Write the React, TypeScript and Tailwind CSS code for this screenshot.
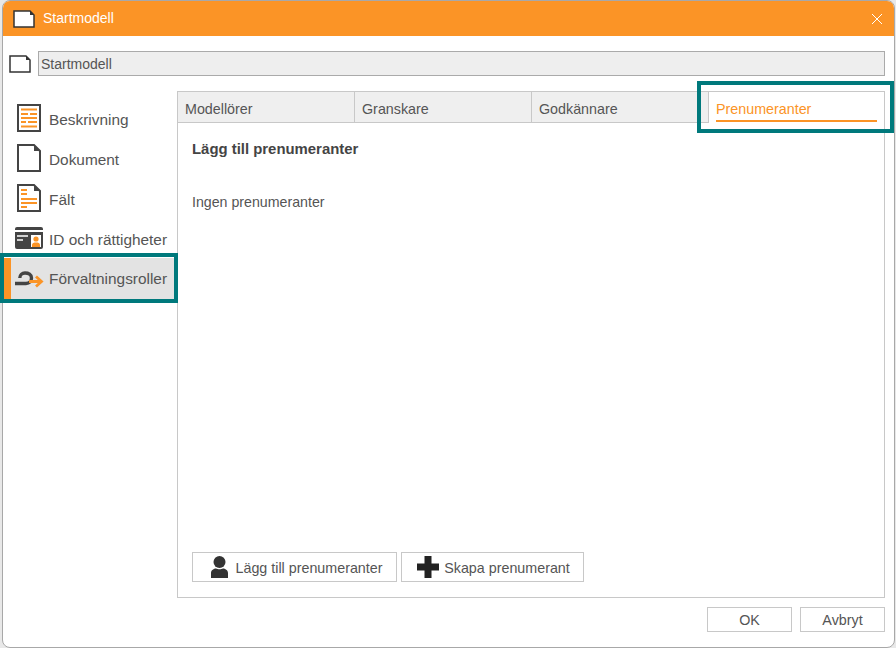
const tabs = ["Modellörer", "Granskare", "Godkännare"];

function PageIcon({ className }: { className?: string }) {
  return (
    <svg className={className} width="22" height="18" viewBox="0 0 22 18" fill="none">
      <path d="M1 1H17L21 5V17H1Z" fill="#fff" stroke="#333" strokeWidth="1.5" />
      <path d="M17 1V5H21Z" fill="#333" />
    </svg>
  );
}

function DescIcon() {
  return (
    <svg width="24" height="28" viewBox="0 0 24 28" fill="none">
      <rect x="1" y="1" width="22" height="26" fill="#fff" stroke="#444" strokeWidth="2" />
      <path
        d="M4 5.500H20M4 10H11M13 10H20M4 14H20M4 18H9M11 18H20M4 22.500H20"
        stroke="#fb9426"
        strokeWidth="2"
      />
    </svg>
  );
}

function DocIcon() {
  return (
    <svg width="24" height="28" viewBox="0 0 24 28" fill="none">
      <path d="M1 1H17L23 7V27H1Z" fill="#fff" stroke="#444" strokeWidth="2" />
      <path d="M17 1V7H23Z" fill="#444" />
    </svg>
  );
}

function FieldIcon() {
  return (
    <svg width="24" height="28" viewBox="0 0 24 28" fill="none">
      <path d="M1 1H17L23 7V27H1Z" fill="#fff" stroke="#444" strokeWidth="2" />
      <path d="M17 1V7H23Z" fill="#444" />
      <path d="M4 6H10M4 10H10M4 15H20M4 19H20M4 23H10" stroke="#fb9426" strokeWidth="1.800" />
    </svg>
  );
}

function IdIcon() {
  return (
    <svg width="28" height="22" viewBox="0 0 28 22" fill="none">
      <rect width="28" height="22" rx="2" fill="#444" />
      <rect x="0" y="3" width="28" height="2" fill="#fff" />
      <path d="M2 9H13M2 13H8" stroke="#fff" strokeWidth="1.600" />
      <rect x="16" y="8" width="10" height="12" fill="#fff" />
      <circle cx="21" cy="12" r="2.600" fill="#fb9426" />
      <path d="M17 20V18C17 16 19 15.500 21 15.500C23 15.500 25 16 25 18V20Z" fill="#fb9426" />
    </svg>
  );
}

function RoleIcon() {
  return (
    <svg width="29" height="18" viewBox="0 0 29 18" fill="none">
      <path
        d="M0 13.500H11C14.500 13.500 16.500 11 16.500 8C16.500 4.500 13.500 3 10 3C7 3 4.800 5 4.800 8"
        stroke="#444"
        strokeWidth="3.400"
      />
      <path d="M14 11.500H26M21 6.500L26.500 11.500L21 16.500" stroke="#fb9426" strokeWidth="2.800" />
    </svg>
  );
}

function PersonIcon() {
  return (
    <svg width="17" height="22" viewBox="0 0 17 22" fill="#333">
      <ellipse cx="8.500" cy="6" rx="6" ry="6" />
      <path d="M0 22V17C0 14 3 12.500 5 12.500C6.500 13.500 10.500 13.500 12 12.500C14 12.500 17 14 17 17V22C12 22.500 5 22.500 0 22Z" />
    </svg>
  );
}

function PlusIcon() {
  return (
    <svg width="22" height="22" viewBox="0 0 22 22" fill="#222">
      <path d="M7.500 0H14.500V7.500H22V14.500H14.500V22H7.500V14.500H0V7.500H7.500Z" />
    </svg>
  );
}

const navItems = [
  { label: "Beskrivning", icon: <DescIcon />, pad: "pl-[14px]" },
  { label: "Dokument", icon: <DocIcon />, pad: "pl-[14px]" },
  { label: "Fält", icon: <FieldIcon />, pad: "pl-[14px]" },
  { label: "ID och rättigheter", icon: <IdIcon />, pad: "pl-[12px]" },
];

export default function App() {
  return (
    <div className="relative h-[648px] w-[896px] overflow-hidden bg-[#e8e8e8] font-['Liberation_Sans',Arial,sans-serif] text-[#555]">
      <div className="ml-[2px] flex h-[648px] w-[893px] flex-col overflow-hidden rounded-[8px] border border-[#a8a8a8] bg-white">
        <div className="flex h-[35px] shrink-0 items-center justify-between bg-[#fb9426] pr-[11px] pl-[10px] text-white">
          <div className="flex items-center gap-[8px]">
            <PageIcon />
            <span className="text-[14px]">Startmodell</span>
          </div>
          <svg width="12" height="12" viewBox="0 0 12 12" stroke="#fff" strokeWidth="1">
            <path d="M1 1L11 11M11 1L1 11" />
          </svg>
        </div>

        <div className="mt-[15px] flex h-[25px] shrink-0 items-center pr-[9px] pl-[6px]">
          <PageIcon className="mr-[7px]" />
          <div className="flex h-[25px] flex-1 items-center border border-[#aaa] bg-[#eee] pt-px pl-[2px] text-[14px]">
            Startmodell
          </div>
        </div>

        <div className="mt-[15px] flex min-h-0 flex-1">
          <div className="w-[174px] shrink-0 pt-[7px]">
            {navItems.map((item) => (
              <div key={item.label} className={`flex h-[40px] items-center ${item.pad}`}>
                <span className={item.pad === "pl-[12px]" ? "mr-[6px]" : "mr-[8px]"}>{item.icon}</span>
                <span className="mt-[4px] text-[15.4px]">{item.label}</span>
              </div>
            ))}
            <div className="ml-px flex h-[42px] w-[171px] items-center border-l-[7px] border-[#fb9426] bg-[#e3e3e3]">
              <span className="mr-[5px] ml-[4px] flex">
                <RoleIcon />
              </span>
              <span className="text-[15.4px]">Förvaltningsroller</span>
            </div>
          </div>

          <div className="flex min-w-0 flex-1 flex-col">
            <div className="mr-[9px] flex min-h-0 flex-1 flex-col border border-[#c8c8c8]">
              <div className="flex h-[31px] shrink-0">
                {tabs.map((tab) => (
                  <div
                    key={tab}
                    className="flex w-[177px] items-center border-r border-b border-[#c8c8c8] bg-[#efefef] pt-[5px] pl-[7px] text-[14.3px]"
                  >
                    {tab}
                  </div>
                ))}
                <div className="flex flex-1 items-end px-[7px] pb-px">
                  <div className="w-full border-b-2 border-[#fb9426] pb-px text-[14.3px] leading-[20px] text-[#fb9426]">
                    Prenumeranter
                  </div>
                </div>
              </div>

              <div className="flex min-h-0 flex-1 flex-col px-[14px] pt-[18px] pb-[15px]">
                <h2 className="text-[14.9px] leading-[16px] font-bold text-[#444]">Lägg till prenumeranter</h2>
                <p className="mt-[37px] text-[14.2px] leading-[16px]">Ingen prenumeranter</p>
                <div className="mt-auto flex gap-[4px]">
                  <button className="flex h-[30px] w-[205px] items-center justify-center gap-[7px] border border-[#c8c8c8] pl-[5px] text-[14.3px]">
                    <PersonIcon />
                    <span className="mt-[4px]">Lägg till prenumeranter</span>
                  </button>
                  <button className="flex h-[30px] w-[183px] items-center justify-center gap-[5px] border border-[#c8c8c8] pl-[2px] text-[14.3px]">
                    <PlusIcon />
                    <span className="mt-[4px]">Skapa prenumerant</span>
                  </button>
                </div>
              </div>
            </div>

            <div className="mr-[9px] flex h-[49px] shrink-0 items-start justify-end gap-[8px] pt-[9px]">
              <button className="h-[25px] w-[85px] border border-[#c8c8c8] pt-[2px] text-[14.3px]">OK</button>
              <button className="h-[25px] w-[85px] border border-[#c8c8c8] pt-[2px] text-[14.3px]">Avbryt</button>
            </div>
          </div>
        </div>
      </div>

      <div className="absolute top-[81px] left-[697px] h-[52px] w-[197px] border-4 border-[#00797c]" />
      <div className="absolute top-[253px] left-0 h-[50px] w-[178px] border-4 border-[#00797c]" />
    </div>
  );
}
